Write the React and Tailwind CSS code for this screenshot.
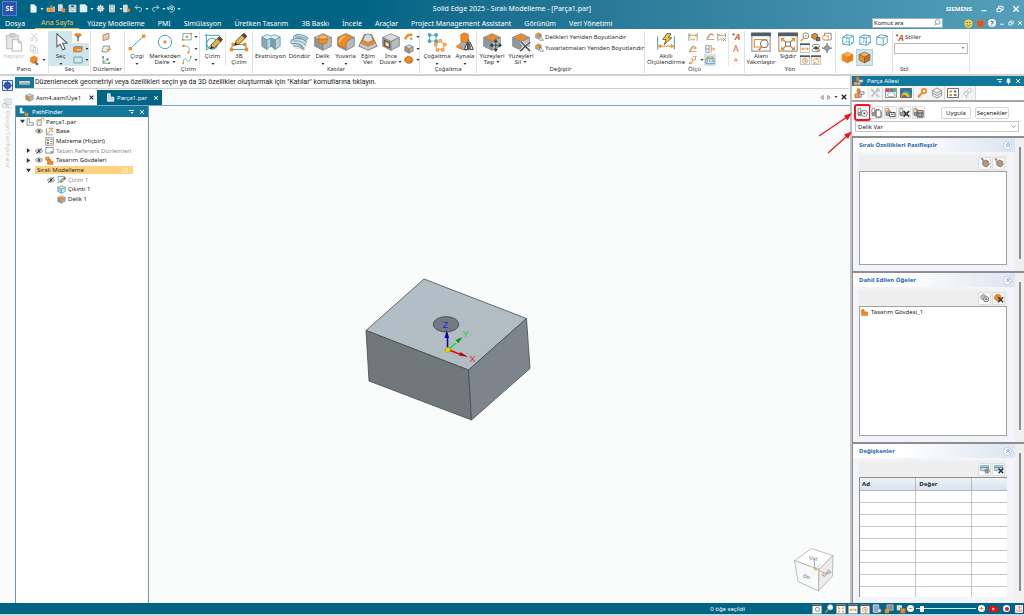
import React from "react";

/* ---------- drawing helpers ---------- */
const O = "#f08a24";
const G = "#6b7378";
const T = "#4aa3bd";

function Svg({ c = "w-[10px] h-[10px]", children, vb = "0 0 24 24" }) {
  return (
    <svg viewBox={vb} className={"shrink-0 " + c} fill="none" stroke={G} strokeWidth="2" strokeLinejoin="round" aria-hidden="true">
      {children}
    </svg>
  );
}
const BIG = "w-[20px] h-[20px]";
const SM = "w-[10px] h-[10px]";

function Caret({ light }) {
  return (
    <svg viewBox="0 0 6 4" className="h-[2px] w-[4px] shrink-0" aria-hidden="true">
      <path d="M0 0h6L3 4z" fill={light ? "#fff" : "#333"} />
    </svg>
  );
}

function CubeShape({ top = "#d5dadd", left = "#8f989d", right = "#b4bbbf", edge = "#7d868a", w = 1 }) {
  return (
    <g stroke={edge} strokeWidth={w}>
      <path d="M12 2l10 4.500-10 5L2 6.500z" fill={top} />
      <path d="M2 6.500l10 5V22L2 17z" fill={left} />
      <path d="M22 6.500l-10 5V22l10-5z" fill={right} />
    </g>
  );
}
const Cube = ({ c = BIG, children, ...p }) => (
  <Svg c={c}>
    <CubeShape {...p} />
    {children}
  </Svg>
);
const Wire = ({ hidden, c = "w-[14px] h-[14px]" }) => (
  <Svg c={c}>
    <g stroke={T} strokeWidth="1.600">
      <path d="M3 7l7-4 11 2v12l-7 4-11-2zM3 7l11 2 7-4M14 9v12" />
      {!hidden && <path d="M10 3v12l11 2M10 15l-7 4" strokeDasharray="3 2" />}
    </g>
  </Svg>
);
const Pencil = () => (
  <g>
    <path d="M9 20l1.500-5.500L18 7l4 4-7.700 7.300z" fill="#e9b04a" stroke="#4b4b4b" strokeWidth="1" />
    <path d="M17 8l4 4 3-3-4-4z" fill="#5e4438" stroke="none" />
    <path d="M9 20l1-3.500 2.500 2.500z" fill="#222" stroke="none" />
  </g>
);

/* ---------- ribbon icons ---------- */
const IPaste = (
  <Svg c={BIG}>
    <g stroke="#c4c8ca" strokeWidth="1.600">
      <path d="M3 4h14v16H3z" fill="#e6e8e9" />
      <path d="M7 2h6v4H7z" fill="#d3d7d9" />
      <path d="M10 9h7l4 4v10H10z" fill="#fff" />
      <path d="M17 9v4h4" />
    </g>
  </Svg>
);
const ICut = (
  <Svg>
    <g stroke="#c4c8ca">
      <path d="M8 15L19 3M16 15L5 3" />
      <circle cx="6" cy="18" r="3" />
      <circle cx="18" cy="18" r="3" />
    </g>
  </Svg>
);
const ICopy = (
  <Svg>
    <path d="M4 3h8l3 3v11H4zM10 8h7l4 4v10H10z" stroke="#c4c8ca" fill="#fff" />
  </Svg>
);
const IFormat = (
  <Svg c="w-[11px] h-[11px]">
    <path d="M3 6l8-4 7 4v8l-8 5-7-5z" fill={O} stroke="#c86c14" strokeWidth="1" />
    <path d="M13 14l8 6-5 2z" fill="#555" stroke="#555" strokeWidth="1" />
  </Svg>
);
const IArrow = (
  <Svg c={BIG}>
    <path d="M7 2v16l4-3.500 3 7 3-1.400-3-6.600h5.500z" fill="#fff" stroke="#5c6468" strokeWidth="1.300" />
  </Svg>
);
const IFilter = (
  <Svg>
    <path d="M4 7h16l-6 7v8h-4v-8z" fill="#7b8286" stroke="none" />
    <path d="M3 6l5-4 4 2 4-2 5 4v3H3z" fill={O} stroke="none" />
  </Svg>
);
const ISelBox = (
  <Svg>
    <path d="M1 9l4-3h17v10l-4 3H1z" fill="#e08a3c" stroke="#8a6b4c" strokeWidth="1.500" />
    <path d="M1 9h6v10H1z" fill={O} stroke="none" />
    <path d="M8 14h12" stroke="#f7d3ae" strokeWidth="3" />
  </Svg>
);
const IRect = (
  <Svg>
    <path d="M2 5h20v14H2z" stroke="#6d8f9c" />
  </Svg>
);
const IPlane1 = (
  <Svg>
    <path d="M5 7l14-4v13L5 21z" fill="#f2c9a3" stroke="#a0826a" />
  </Svg>
);
const IPlane2 = (
  <Svg>
    <path d="M2 19L6 5h15l-4 14z" fill="#eee" stroke="#7d868a" />
    <path d="M12 13h11M20 10l3 3-3 3" stroke={O} />
  </Svg>
);
const IPlane3 = (
  <Svg>
    <path d="M5 3v17h16M5 20l8-8" stroke={T} />
    <path d="M3 3h4v4H3zM13 8h5v5h-5zM18 17h4v4h-4z" fill="#777" stroke="none" />
    <path d="M4 14h4v4H4z" fill={O} stroke="none" />
  </Svg>
);
const ILine = (
  <Svg c={BIG}>
    <path d="M4 20L20 5" stroke={T} strokeWidth="1.200" />
    <path d="M2 18h4v4H2zM18 3h4v4h-4z" fill={O} stroke="none" />
  </Svg>
);
const ICircle = (
  <Svg c={BIG}>
    <circle cx="12" cy="12" r="8" stroke={T} strokeWidth="1.200" />
    <path d="M10.300 10.300h3.400v3.400h-3.400z" fill={O} stroke="none" />
  </Svg>
);
const IRectDot = (
  <Svg>
    <path d="M2 4h20v15H2z" stroke={T} />
    <path d="M9 9h6v5H9zM0 17h4v4H0zM20 2h4v4h-4z" fill={O} stroke="none" />
  </Svg>
);
const IArc = (
  <Svg>
    <path d="M4 5c12-1 16 5 12 15" stroke={T} />
    <path d="M1 2h5v5H1zM13 18h5v5h-5z" fill={O} stroke="none" />
  </Svg>
);
const ICurve = (
  <Svg>
    <path d="M3 19c0-12 7-12 9-6s8 2 9-8" stroke={T} />
    <path d="M1 18h4v4H1zM19 2h4v4h-4z" fill={O} stroke="none" />
  </Svg>
);
const ISketch = (
  <Svg c={BIG}>
    <path d="M4 2v20M2 4h18M4 22L20 5" stroke={T} strokeWidth="1.200" />
    <circle cx="11" cy="14" r="6.500" stroke={T} strokeWidth="1.400" />
    <Pencil />
  </Svg>
);
const ISketch3 = (
  <Svg c={BIG}>
    <path d="M5 15h14l3 6H2z" stroke={T} strokeWidth="1.200" />
    <path d="M3 13h4v4H3zM17 13h4v4h-4zM1 19h4v4H1zM19 19h4v4h-4z" fill={O} stroke="none" />
    <g transform="translate(-2 -4)">
      <Pencil />
    </g>
  </Svg>
);
const IExtrude = (
  <Svg c={BIG}>
    <g stroke={T} strokeWidth="1">
      <path d="M1 6l7-3 4 2 4-2 7 3-6 3.500-5-2-5 2z" fill="#e1edf1" />
      <path d="M1 6l6 3.500V21l-6-4z" fill="#98a4a9" />
      <path d="M7 9.500l5-2V17l-5 4zM23 6l-6 3.500V21l6-4z" fill="#c5d0d4" />
      <path d="M12 7.500l5 2V21l-5-4z" fill="#8c979c" />
    </g>
  </Svg>
);
const IRevolve = (
  <Svg c={BIG}>
    <path d="M8 3l14 4-4 14H7L2 16z" fill="#dde2e4" stroke="none" />
    <path d="M8 3c6 0 11 1 14 5M5 8c6-1 12 0 15 5M2 14c6-1 12 1 15 7M8 3C4 5 3 7 5 8M5 8c-4 2-5 4-3 6" stroke={T} strokeWidth="1.300" />
    <path d="M6 6c6-1 11 0 15 4M3 11c6-1 12 0 16 5M4 17c5-1 9 1 12 4" stroke="#9aa4a9" strokeWidth="1.600" />
  </Svg>
);
const IHole = (
  <Cube>
    <path d="M7 6v6c0 3 10 3 10 0V6z" fill={O} stroke="#c86c14" strokeWidth=".8" />
    <ellipse cx="12" cy="6" rx="5" ry="2.500" fill="#fbb469" stroke="#c86c14" strokeWidth=".8" />
  </Cube>
);
const IRound = (
  <Cube>
    <path d="M11 2.500l9 4C13 8 12 13 11.500 20L2 15c0-8 4-11 9-12.500z" fill={O} stroke="#c86c14" strokeWidth=".8" />
    <path d="M11 5C7 6 5 8 4 12" stroke="#ffc98a" strokeWidth="1.800" />
  </Cube>
);
const IDraft = (
  <Svg c={BIG}>
    <path d="M8 3h8l7 14-11 5L1 17z" fill="#c3cacd" stroke={G} strokeWidth="1" />
    <path d="M8 3l4 2 4-2 5 10-9 4-9-4z" fill={O} stroke="#c86c14" strokeWidth=".8" />
    <path d="M8 4l4-2 4 2 2 6-6 3-6-3z" fill="#d5dadd" stroke={G} strokeWidth=".8" />
  </Svg>
);
const IThin = (
  <Cube>
    <path d="M4 10l6 3v6l-6-3z" fill={O} stroke="#444" strokeWidth="1" />
    <path d="M6 12.500l3 1.500v3.500L6 16z" fill="#eee" stroke="none" />
  </Cube>
);
const ISweep = (
  <Svg>
    <path d="M4 18c0-9 7-12 16-11" stroke={O} strokeWidth="6" />
    <path d="M16 12l6 6h-8z" fill="#888" stroke="none" />
  </Svg>
);
const IRib = <Cube c={SM} w={2}><path d="M8 8l8 4v7l-4 2V14z" fill={O} stroke="none" /></Cube>;
const IAdd = (
  <Svg>
    <path d="M2 8l8-5 8 3 4 6-6 7-7 1-7-5z" fill={O} stroke="#b8640f" />
    <path d="M14 13l8 2-7 6z" fill="#6b7378" stroke="none" opacity=".6" />
  </Svg>
);
const IPattern = (
  <Svg c={BIG}>
    <g stroke={T} strokeWidth="1">
      <path d="M3 4h8v7H3z" />
      <path d="M1.500 2h3v3h-3zM9.500 2h3v3h-3zM1.500 9.500h3v3h-3zM9.500 9.500h3v3h-3z" fill="#4aa3bd" />
    </g>
    <g stroke={O} strokeWidth="1">
      <path d="M16 11l5 4-2 6h-7l-2-6z" />
      <path d="M14.500 9h3v3h-3zM20 13.500h3v3h-3zM17.500 20h3v3h-3zM11 20h3v3h-3zM9 13.500h3v3H9z" fill="#f7c795" />
    </g>
  </Svg>
);
const IMirror = (
  <Svg c={BIG}>
    <path d="M8 6h7v6l6 7-8 3-11-4 6-6z" fill="#a6afb3" stroke={G} strokeWidth="1" />
    <path d="M7 3l4-2 5 2v8l-4 2-5-2z" fill={O} stroke="#c86c14" strokeWidth=".8" />
    <path d="M3 15l6 3v4l-8-4z" fill={O} stroke="none" />
    <path d="M16.500 9v13M11 21l4-9v9zM22 21l-4-9v9z" stroke="#444" strokeWidth="1.200" fill="#ddd" />
  </Svg>
);
const IMove = (
  <Svg c={BIG}>
    <CubeShape top={O} />
    <path d="M16.500 10v12M10.500 16h12M16.500 9l-2 3h4zM16.500 23.500l-2-3h4zM9.500 16l3-2v4zM23.500 16l-3-2v4z" fill="#444" stroke="#444" strokeWidth="1.100" />
  </Svg>
);
const IDelFace = (
  <Svg c={BIG}>
    <CubeShape top={O} />
    <path d="M12 12l11 11M23 12L11 23" stroke="#fff" strokeWidth="3.500" />
    <path d="M12 12l11 11M23 12L11 23" stroke="#555" strokeWidth="2" />
  </Svg>
);
const IResize = (
  <Svg c="w-[9px] h-[9px]">
    <path d="M1 7l8-5 8 4v8l-8 5-8-4z" fill="#a6adb1" stroke={G} strokeWidth="1" />
    <path d="M4 5l6-3 6 3v5l-6 3-6-3z" fill={O} stroke="none" />
    <path d="M13 10v12h10z" fill="#fff" stroke="#555" strokeWidth="1.500" />
  </Svg>
);
const ISmart = (
  <Svg c={BIG}>
    <path d="M2 5v16M22 5v16" stroke={T} strokeWidth="1.300" />
    <path d="M3 17h18" stroke={O} strokeWidth="1.300" />
    <path d="M2 17l4-2.500v5zM22 17l-4-2.500v5z" fill={O} stroke="none" />
    <path d="M13 2h5l-3 5h4l-9 8 2-6H8z" fill="#f8c52c" stroke="#555" strokeWidth="1" />
  </Svg>
);
const mk = (d, e) => (
  <Svg>
    <path d={d} stroke={O} />
    {e && <path d={e} stroke="#6d8f9c" />}
  </Svg>
);
const ID1 = mk("M3 8h18M3 8l4-3M3 8l4 3M21 8l-4-3M21 8l-4 3M6 20l2-4 3 4 3-4 3 4", "M2 3v18M22 3v18");
const ID2 = mk("M4 18c2-12 8-14 16-8M3 18h18M15 4l5 6-7 1", "M4 20L12 4");
const ID3 = mk("M2 20h8v-8h8M18 4v8M12 4h9", "M10 12V6M5 20v-5");
const ID4 = mk("M4 16C6 8 12 3 20 6M6 18h16", "M4 20L14 4l7 5");
const ID5 = mk("M15 3v18M15 12h8M19 8l4 4-4 4", "M2 4h8v16H2zM2 12h8M15 4h-3");
const ID6 = mk("M4 6l4 3M20 6l-4 3M3 5h18", "M2 9h20v12H2zM6 13v4M12 13v4M18 13v4");
const ID7 = mk("M3 8h16M3 8l4-3M5 20l3-4 3 4 3-4", "M2 3v18M20 3v9M14 14l8 8M22 14l-8 8");
const LetterA = ({ size = "text-[9px] font-bold italic", lead }) => (
  <span className={"flex leading-none text-[#dd5a1c] " + size}>
    {lead && <span className="text-[6px] leading-none text-[#445566]">*</span>}A
  </span>
);
const Frame = ({ children, c = SM }) => (
  <Svg c={c}>
    <path d="M1 1h22v22H1z" fill="#fff" stroke="#9a9fa2" strokeWidth="1.500" />
    <path d="M0 1h24v4H0z" fill="#555c60" stroke="none" />
    {children}
  </Svg>
);
const IZoomArea = (
  <Frame c={BIG}>
    <path d="M4 9h15v9H4z" stroke={O} strokeWidth="1.400" />
    <circle cx="16" cy="14" r="4.500" fill="#fff" stroke={G} strokeWidth="1.300" />
    <path d="M12.500 18L9 22" stroke={O} strokeWidth="2" />
  </Frame>
);
const IFit = (
  <Frame c={BIG}>
    <path d="M9 12L5 8.500M15 12l4-3.500M9 17l-4 4M15 17l4 4" stroke={O} strokeWidth="1.800" />
    <path d="M3.500 7h5l-5 5zM20.500 7h-5l5 5zM3.500 22h5l-5-5zM20.500 22h-5l5-5z" fill={O} stroke="none" />
    <path d="M9 12h6v5H9z" fill="#fff" stroke={G} strokeWidth="1.200" />
  </Frame>
);
const IMag = (
  <Svg>
    <circle cx="14" cy="9" r="7" fill="#fff" />
    <path d="M9 14l-7 8" stroke={O} strokeWidth="3" />
    <path d="M11 11h6l-3-5z" fill={O} stroke="none" />
  </Svg>
);
const IPan = (
  <Svg>
    <path d="M2 6l8-3 6 3v8l-7 4-7-4z" fill={O} stroke="#555" />
    <path d="M13 13h8v8h-8z" fill="#777" stroke="#444" />
  </Svg>
);
const IWin = (
  <Svg>
    <path d="M6 3h16v16H6z" />
    <path d="M2 9h13v10H2z" fill="#fff" stroke={O} />
  </Svg>
);
const IWide = (
  <Frame>
    <path d="M4 14h16M4 14l4-3M4 14l4 3M20 14l-4-3M20 14l-4 3" stroke={O} />
  </Frame>
);
const ISpin = (
  <Svg>
    <ellipse cx="12" cy="7" rx="9" ry="4" />
    <ellipse cx="12" cy="17" rx="10" ry="4" />
    <path d="M7 12h12M12 7v10" stroke="#444" strokeWidth="3" />
    <path d="M15 15l6 4-7 2z" fill={O} stroke="none" />
  </Svg>
);
const ILook = (
  <Svg>
    <circle cx="12" cy="12" r="6" fill="#9aa3a7" />
    <path d="M12 0v5M12 19v5M0 12h5M19 12h5" stroke={G} strokeWidth="3" />
  </Svg>
);
const IRot = (
  <Frame>
    <circle cx="12" cy="14" r="6" stroke={O} />
    <path d="M12 11v4h3" stroke={G} />
  </Frame>
);
const IRot2 = (
  <Frame>
    <path d="M6 15a6 6 0 0 1 11-4M18 13a6 6 0 0 1-11 5M17 7v4h-4M7 22v-4h4" stroke={O} />
  </Frame>
);

/* ---------- ribbon pieces ---------- */
function Big({ icon, a, b, caret, w = "w-[27px]", on, dim }) {
  return (
    <button
      type="button"
      className={"flex h-[35px] shrink-0 flex-col items-center whitespace-nowrap pt-px text-[6px] leading-[6px] " + w + (on ? " bg-[#cfe6ec]" : "") + (dim ? " text-[#bfc3c5]" : " text-[#2e2e2e]")}
    >
      {icon}
      <span className="pt-px">{a}</span>
      {b && (
        <span className="flex items-center gap-[2px]">
          {b}
          {caret && <Caret />}
        </span>
      )}
      {caret && !b && <span className="mt-[4px] flex"><Caret /></span>}
    </button>
  );
}
function Small({ icon, caret, on, label }) {
  return (
    <button type="button" aria-label={label} className={"flex h-[12px] items-center justify-start gap-[2px] px-px " + (on ? "bg-[#cfe6ec]" : "")}>
      {icon}
      {caret && <Caret />}
    </button>
  );
}
const Col = ({ children, w = "w-[16px]" }) => <div className={"flex shrink-0 flex-col " + w}>{children}</div>;
const Rule = () => <div className="w-px shrink-0 self-stretch bg-[#e4e4e4]" />;
function Group({ name, w, children, align = "text-center" }) {
  return (
    <section className={"flex h-[42px] shrink-0 flex-col border-r border-[#e2e2e2] " + w}>
      <div className="flex h-[35px]">{children}</div>
      {name && <h2 className={"h-[7px] whitespace-nowrap text-[6px] leading-[7px] text-[#333] " + align}>{name}</h2>}
    </section>
  );
}

/* ---------- header ---------- */
const W = "#eef5f7";
const qa = (d, fill = "none", acc) => (
  <Svg c="w-[9px] h-[9px]">
    <path d={d} stroke={W} fill={fill} />
    {acc && <path d={acc} fill={O} stroke="none" />}
  </Svg>
);
const quick = [
  ["Yeni", qa("M5 2h9l5 5v15H5z", W), true, "w-[17px]"],
  ["Aç", qa("M3 11h14l5-4v13H3z", W, "M2 20l4-9h17l-4 10zM10 2l8 3-4 5z"), false, "w-[11px]"],
  ["Şablon", qa("M4 2h10v16H4z", "#cdd9dd", "M12 12h10v10H12z"), false, "w-[11px]"],
  ["Kaydet", qa("M3 3h18v18H3zM7 3v7h10V3M7 21v-7h10v7", "#b9b1a8"), false, "w-[11px]"],
  ["Farklı Kaydet", qa("M3 2h14l4 4v15H3zM7 13h8v8", "#e8eef0"), true, "w-[17px]"],
  [
    "Ayarlar",
    <Svg c="w-[9px] h-[9px]">
      <path d="M12 2v20M2 12h20M5 5l14 14M19 5L5 19" stroke={W} strokeWidth="3.500" />
      <circle cx="12" cy="12" r="5.500" fill="#d9c2ae" stroke={W} />
    </Svg>,
    false,
    "w-[12px]",
  ],
  ["Özellikler", qa("M4 3h13v18H4zM7 8h8M7 12h8M7 16h8", "#9dabb0"), true, "w-[14px]"],
  ["Yazdır", qa("M4 3h10v18H4z", "#d8d4d0", "M14 12h7v9h-7z"), false, "w-[12px]"],
  ["Geri Al", qa("M4 9h10c8 0 8 11 0 11M9 3L3 9l6 6"), true, "w-[17px]"],
  ["Yinele", qa("M20 9H10c-8 0-8 11 0 11M15 3l6 6-6 6"), true, "w-[16px]"],
  ["Güncelle", qa("M3 14c0-9 13-13 17-4M7 20c6 4 14-1 13-9M1 8l2 7 6-3M10 9h5v6h-5z"), false, "w-[10px]"],
];
const tabs = ["Yüzey Modelleme", "PMI", "Simülasyon", "Üretken Tasarım", "3B Baskı", "İncele", "Araçlar", "Project Management Assistant", "Görünüm", "Veri Yönetimi"];

const IMin = <path d="M4 17h15" strokeWidth="3.500" />;
const IRestore = <path d="M3 10h12v10H3zM8 9V4h13v11h-5" />;
const IClose = <path d="M4 4l16 16M20 4L4 20" strokeWidth="4" />;
const WinBtn = ({ label, d, c = "w-[8px] h-[8px]" }) => (
  <button type="button" aria-label={label} className="flex items-center">
    <svg viewBox="0 0 24 24" className={c} fill="none" stroke="#fff" strokeWidth="3" aria-hidden="true">{d}</svg>
  </button>
);

function Face({ fill, sad }) {
  return (
    <svg viewBox="0 0 24 24" className="h-[9px] w-[9px]" aria-hidden="true">
      <circle cx="12" cy="12" r="11" fill={fill} />
      <path d={sad ? "M7 18c3-4 7-4 10 0" : "M6 14c3 5 9 5 12 0"} stroke="#6a4a20" strokeWidth="2" fill="none" />
      <circle cx="8" cy="9" r="1.800" fill="#553" />
      <circle cx="16" cy="9" r="1.800" fill="#553" />
    </svg>
  );
}

function Header() {
  return (
    <header className="flex h-[29px] shrink-0 flex-col bg-linear-to-r from-[#006485] from-35% to-[#559fba] text-white">
      <div className="grid h-[17px] grid-cols-[1fr_auto_1fr] items-center">
        <div className="flex items-center pl-[3px]">
          <div className="mr-[13px] flex h-[13px] w-[13px] items-center justify-center bg-[#2f52b0] text-[7px] font-bold leading-none outline outline-[#5d7ccc]">SE</div>
          {quick.map(([n, i, caret, w]) => (
            <button key={n} type="button" aria-label={n} className={"flex shrink-0 items-center gap-[2px] " + w}>
              {i}
              {caret && <Caret light />}
            </button>
          ))}
          <Caret light />
        </div>
        <h1 className="text-[7px] leading-none">Solid Edge 2025 - Sıralı Modelleme - [Parça1.par]</h1>
        <div className="flex items-center justify-end gap-[8px] pr-[4px]">
          <span className="text-[6px] font-bold leading-none">SIEMENS</span>
          <WinBtn label="Simge durumuna küçült" d={IMin} />
          <WinBtn label="Geri yükle" d={IRestore} />
          <WinBtn label="Kapat" d={IClose} />
        </div>
      </div>
      <div className="flex h-[12px] items-center justify-between">
        <nav className="flex h-full items-center text-[7px] leading-none whitespace-nowrap">
          <button type="button" className="w-[30px] text-center">Dosya</button>
          <button type="button" className="ml-[5px] h-full border-b border-[#c9c25a] px-[6px] text-[#e6c84c]">Ana Sayfa</button>
          <div className="ml-[2px] flex gap-px">
            {tabs.map((t) => (
              <button key={t} type="button" className="px-[6px]">{t}</button>
            ))}
          </div>
        </nav>
        <div className="flex items-center gap-[3px] pr-px">
          <label className="mr-[18px] flex h-[10px] w-[71px] items-center border border-[#8fb9c9] bg-white pr-px">
            <input aria-label="Komut ara" placeholder="Komut ara" className="w-full min-w-0 px-px text-[6px] leading-none text-black outline-none placeholder:text-[#222]" />
            <Svg c="w-[8px] h-[8px]">
              <circle cx="14" cy="9" r="7" />
              <path d="M9 14l-6 7" />
            </Svg>
          </label>
          <Face fill="#f3d64a" />
          <Face fill="#d9663a" sad />
          <span className="flex h-[8px] w-[8px] items-center justify-center rounded-full bg-[#eef3f5] text-[7px] font-bold leading-none text-[#556677]">?</span>
          <WinBtn label="Belgeyi küçült" d={IMin} c="w-[6px] h-[6px]" />
          <WinBtn label="Belgeyi geri yükle" d={IRestore} c="w-[6px] h-[6px]" />
          <WinBtn label="Belgeyi kapat" d={IClose} c="w-[6px] h-[6px]" />
        </div>
      </div>
    </header>
  );
}

/* ---------- ribbon ---------- */
function Ribbon() {
  return (
    <div className="flex h-[47px] shrink-0 overflow-hidden border-b-2 border-[#d2d2d2] bg-white pt-[2px]">
      <Group name="Pano" w="w-[49px]">
        <Big icon={IPaste} a="Yapıştır" dim w="w-[28px]" />
        <Col>
          <Small label="Kes" icon={ICut} />
          <Small label="Kopyala" icon={ICopy} />
          <Small label="Biçim" icon={IFormat} caret />
        </Col>
      </Group>
      <Group name="Seç" w="w-[42px]">
        <Big icon={IArrow} a="Seç" caret on w="w-[23px]" />
        <Col w="w-[17px]">
          <Small label="Filtre" icon={IFilter} />
          <Small label="Seçim önceliği" icon={ISelBox} caret on />
          <Small label="Seçim kutusu" icon={IRect} caret on />
        </Col>
      </Group>
      <Group name="Düzlemler" w="w-[34px]">
        <Col w="w-[12px] ml-[9px]">
          <Small label="Çakışık düzlem" icon={IPlane1} />
          <Small label="Paralel düzlem" icon={IPlane2} />
          <Small label="Koordinat sistemi" icon={IPlane3} />
        </Col>
      </Group>
      <Group name="Çizim" w="w-[128px]">
        <Big icon={ILine} a="Çizgi" caret w="w-[24px]" />
        <Big icon={ICircle} a="Merkezden" b="Daire" caret w="w-[32px]" />
        <Col w="w-[18px]">
          <Small label="Dikdörtgen" icon={IRectDot} caret />
          <Small label="Yay" icon={IArc} caret />
          <Small label="Eğri" icon={ICurve} caret />
        </Col>
        <Rule />
        <Big icon={ISketch} a="Çizim" caret w="w-[25px]" />
        <Rule />
        <Big icon={ISketch3} a="3B" b="Çizim" w="w-[26px]" />
      </Group>
      <Group name="Katılar" w="w-[167px]">
        <Big icon={IExtrude} a="Ekstrüzyon" w="w-[35px]" />
        <Big icon={IRevolve} a="Döndür" w="w-[23px]" />
        <Big icon={IHole} a="Delik" caret w="w-[23px]" />
        <Big icon={IRound} a="Yuvarla" caret w="w-[23px]" />
        <Big icon={IDraft} a="Eğim" b="Ver" w="w-[22px]" />
        <Big icon={IThin} a="İnce" b="Duvar" caret w="w-[24px]" />
        <Col>
          <Small label="Süpürme" icon={ISweep} caret />
          <Small label="Federe" icon={IRib} caret />
          <Small label="Ekle" icon={IAdd} caret />
        </Col>
      </Group>
      <Group name="Çoğaltma" w="w-[57px]">
        <Big icon={IPattern} a="Çoğaltma" caret w="w-[34px]" />
        <Big icon={IMirror} a="Aynala" caret w="w-[22px]" />
      </Group>
      <Group name="Değiştir" w="w-[168px]">
        <Big icon={IMove} a="Yüzeyleri" b="Taşı" caret w="w-[30px]" />
        <Big icon={IDelFace} a="Yüzeyleri" b="Sil" caret w="w-[28px]" />
        <div className="flex flex-col whitespace-nowrap text-[6px] leading-none text-[#2e2e2e]">
          {["Delikleri Yeniden Boyutlandır", "Yuvarlatmaları Yeniden Boyutlandır"].map((t) => (
            <button key={t} type="button" className="flex h-[11px] items-center gap-px">
              {IResize}
              {t}
            </button>
          ))}
        </div>
      </Group>
      <Group name="Ölçü" w="w-[100px]">
        <Big icon={ISmart} a="Akıllı" b="Ölçülendirme" w="w-[42px]" />
        <Col w="w-[17px]">
          <Small label="Mesafe" icon={ID1} />
          <Small label="Açı" icon={ID2} />
          <Small label="Koordinat" icon={ID3} caret />
        </Col>
        <Col w="w-[12px]">
          <Small label="Açısal koordinat" icon={ID4} />
          <Small label="Simetrik çap" icon={ID5} />
          <Small label="Eksen" icon={ID6} on />
        </Col>
        <Col w="w-[12px]">
          <Small label="Ölçü sil" icon={ID7} />
        </Col>
        <Rule />
        <Col w="w-[14px] items-center">
          <Small label="Ölçü stili" icon={<LetterA lead />} />
          <Small label="Yazıyı büyüt" icon={<LetterA size="text-[9px]" />} />
          <Small label="Yazıyı küçült" icon={<LetterA size="text-[6px]" />} />
        </Col>
      </Group>
      <Group name="Yön" w="w-[91px]">
        <Big icon={IZoomArea} a="Alanı" b="Yakınlaştır" w="w-[32px]" />
        <Big icon={IFit} a="Sığdır" w="w-[22px]" />
        <div className="grid grid-cols-3">
          {[["Yakınlaştır", IMag], ["Kaydır", IPan], ["Görünüm penceresi", IWin], ["Genişlik", IWide], ["Döndür", ISpin], ["Yüze bak", ILook], ["Önceki görünüm", IRot], ["Yenile", IRot2]].map(([n, i]) => (
            <button key={n} type="button" aria-label={n} className="flex h-[11px] w-[11px] items-center justify-center">{i}</button>
          ))}
        </div>
      </Group>
      <Group w="w-[57px]">
        <div className="grid grid-cols-3 pl-[3px]">
          <button type="button" aria-label="Tel çerçeve" className="flex h-[17px] w-[17px] items-center justify-center"><Wire /></button>
          <button type="button" aria-label="Gizli kenarlar" className="flex h-[17px] w-[17px] items-center justify-center"><Wire /></button>
          <button type="button" aria-label="Görünür kenarlar" className="flex h-[17px] w-[17px] items-center justify-center"><Wire hidden /></button>
          <button type="button" aria-label="Gölgeli" className="flex h-[17px] w-[17px] items-center justify-center">
            <Cube c="w-[13px] h-[13px]" top="#fbb055" left="#f08a24" right="#e57c14" edge="#e57c14" />
          </button>
          <button type="button" aria-label="Kenarlı gölgeli" className="flex h-[17px] w-[17px] items-center justify-center border border-[#a9d3e0] bg-[#cfe6ec]">
            <Cube c="w-[13px] h-[13px]" top="#fbb055" left="#f08a24" right="#c9721c" edge="#555" />
          </button>
        </div>
      </Group>
      <Group name="Stil" w="w-[77px]" align="pl-[7px]">
        <div className="flex w-full flex-col px-px">
          <label htmlFor="style" className="flex h-[12px] items-center gap-px pl-px text-[6px] leading-none text-[#333]">
            <LetterA size="text-[9px] font-bold italic" lead /> Stiller
          </label>
          <div className="relative">
            <select id="style" className="block h-[11px] w-full appearance-none border border-[#b9b9b9] bg-white text-[6px]" />
            <span className="pointer-events-none absolute right-[3px] top-[4px] flex opacity-60"><Caret /></span>
          </div>
        </div>
      </Group>
    </div>
  );
}

/* ---------- tree ---------- */
const Eye = ({ off }) => (
  <Svg c="w-[8px] h-[8px]">
    <path d="M1 12c5-8 17-8 22 0-5 8-17 8-22 0z" stroke="#555" />
    <circle cx="12" cy="12" r="4.500" fill="#555" stroke="none" />
    {off && <path d="M3 21L21 3" stroke="#333" />}
  </Svg>
);
const Tri = ({ open }) => (
  <svg viewBox="0 0 6 6" className="h-[5px] w-[5px] shrink-0" aria-hidden="true">
    <path d={open ? "M0 1h6L3 5z" : "M1 0v6l4-3z"} fill="#333" />
  </svg>
);
const IPart = (
  <Svg c="w-[8px] h-[8px]">
    <path d="M3 2h7v12h12v8H3z" fill="#f5f5f5" />
  </Svg>
);
const IPart2 = (
  <Svg c="w-[9px] h-[9px]">
    <path d="M3 8h11v14H3z" />
    <path d="M8 15V9l9-5M13 3h8v8" stroke={O} />
  </Svg>
);
const IBase = (
  <Svg c="w-[9px] h-[9px]">
    <path d="M4 3v18h17M4 21L20 4" stroke="#7c8a90" />
    <path d="M10 2h5v4h-5zM18 9h4v4h-4zM2 10h4v4H2zM17 2h4v4h-4z" fill={O} stroke="none" />
  </Svg>
);
const IMat = (
  <Svg c="w-[9px] h-[9px]">
    <path d="M2 2h20v20H2z" fill="#fff" />
    <path d="M5 5h6v6H5z" fill={O} stroke="none" />
    <path d="M5 14h6v5H5z" fill="#3f8fb0" stroke="none" />
    <path d="M14 7h6M14 12h6M14 17h6" />
  </Svg>
);
const IRef = (
  <Svg c="w-[9px] h-[9px]">
    <path d="M2 4h20v15H2z" fill="#fff" stroke="#777" />
    <path d="M14 16h7" stroke="#777" strokeWidth="3" />
  </Svg>
);
const IBody = (
  <Svg c="w-[9px] h-[9px]">
    <path d="M2 3h9v8H2z" fill="#fbb055" stroke="#c86c14" />
    <path d="M7 9h8v5h6v8H7z" fill={O} stroke="#c86c14" />
  </Svg>
);
const ISk = (
  <Svg c="w-[9px] h-[9px]">
    <path d="M3 3v18M3 4h18M3 21L15 8" stroke={T} />
    <Pencil />
  </Svg>
);
const IExtr = (
  <Cube c="w-[9px] h-[9px]" top="#e1edf1" left="#b9cdd5" right="#dfe9ec" edge={T} w={2} />
);
const IHoleS = (
  <Cube c="w-[9px] h-[9px]" edge="#7d868a" w={1.5}>
    <path d="M7 5v8c0 3 10 3 10 0V5z" fill={O} stroke="none" />
  </Cube>
);
const L1 = "pl-[10px]";
const L2 = "pl-[22px]";
const tree = [
  { pad: L1, eye: "on", icon: IBase, t: "Base" },
  { pad: L1, icon: IMat, t: "Malzeme (Hiçbiri)" },
  { pad: L1, tri: true, eye: "off", icon: IRef, t: "Taban Referans Düzlemleri", dim: true },
  { pad: L1, tri: true, eye: "on", icon: IBody, t: "Tasarım Gövdeleri" },
  null,
  { pad: L2, eye: "off", icon: ISk, t: "Çizim 1", dim: true },
  { pad: L2, icon: IExtr, t: "Çıkıntı 1" },
  { pad: L2, icon: IHoleS, t: "Delik 1" },
];
function PathFinder() {
  return (
    <aside className="flex w-[134px] shrink-0 flex-col border-x border-[#6c97b8] bg-white">
      <div className="flex h-[11px] items-center gap-[3px] bg-[#12789b] px-[3px] text-[6px] leading-none text-white">
        <Svg c="w-[10px] h-[10px]">
          <path d="M2 2h6v9h5v4H2z" fill="#e8eef0" stroke="none" />
          <path d="M14 14h8v8h-8z" fill={O} stroke="none" />
        </Svg>
        <h2 className="flex-1">PathFinder</h2>
        <button type="button" aria-label="Menü" className="mr-[2px] flex flex-col items-center gap-px"><span className="h-px w-[5px] bg-white" /><Caret light /></button>
        <WinBtn label="PathFinder kapat" d={IClose} c="w-[6px] h-[6px]" />
      </div>
      <ul className="grid h-[87px] auto-rows-fr text-[6px] leading-none text-[#222]">
        <li className="flex items-center gap-px pl-[4px]">
          <Tri open />
          {IPart}
          <span className="flex pl-px">{IPart2}</span>
          <span>Parça1.par</span>
        </li>
        {tree.map((r, i) =>
          r ? (
            <li key={i} className={"flex items-center " + r.pad + (r.dim ? " text-[#8c8c8c]" : "")}>
              <span className="flex w-[9px]">{r.tri && <Tri />}</span>
              <span className="flex w-[10px]">{r.eye && <Eye off={r.eye === "off"} />}</span>
              {r.icon}
              <span className="whitespace-nowrap pl-[2px]">{r.t}</span>
            </li>
          ) : (
            <li key={i} className="flex items-center gap-[4px] pl-[10px]">
              <Tri open />
              <span className="flex h-[8px] w-[98px] items-center justify-between bg-[#ffd180] pl-[2px] pr-[4px]">
                Sıralı Modelleme
                <Svg c="w-[7px] h-[7px]"><path d="M3 4h14v16H3zM8 10l4 5 9-12" stroke="#fff4dc" /></Svg>
              </span>
            </li>
          )
        )}
      </ul>
    </aside>
  );
}

/* ---------- canvas ---------- */
function Viewport() {
  return (
    <main className="relative min-w-0 flex-1 overflow-hidden bg-[#fafcfc]">
      <svg viewBox="0 0 190 160" className="absolute left-[206px] top-[164px] h-[160px] w-[190px]" role="img" aria-label="Parça modeli">
        <defs>
          <linearGradient id="top" x1="0" y1="0" x2="1" y2="1"><stop offset="0" stopColor="#b3bfc6" /><stop offset="1" stopColor="#b0bcc2" /></linearGradient>
          <linearGradient id="side" x1="0" y1="0" x2="1" y2="1"><stop offset="0" stopColor="#7a828a" /><stop offset="1" stopColor="#80868e" /></linearGradient>
        </defs>
        <g stroke="#444b50" strokeWidth=".8" strokeLinejoin="round">
          <path d="M69 9l102.500 39.500L113.500 100 11 60.500z" fill="url(#top)" />
          <path d="M11 60.500L113.500 100l3 50L14 111z" fill="#70787b" />
          <path d="M171.500 48.500L113.500 100l3 50 58.500-51.500z" fill="url(#side)" />
          <ellipse cx="91" cy="54.300" rx="12.800" ry="7.700" fill="#737b80" />
        </g>
        <path d="M92.500 79V67" stroke="#0808a8" strokeWidth="1.600" />
        <path d="M91.800 60l-2.300 8h4.600z" fill="#0808a8" />
        <path d="M94 79l7-6" stroke="#0be00b" strokeWidth="1.400" />
        <path d="M107.500 67l-7 3 2.800 3.300z" fill="#0a9a1a" />
        <path d="M94 80l13 5" stroke="#e80808" strokeWidth="1.400" />
        <path d="M113 87l-7.500-5-1.500 3.600z" fill="#b80808" />
        <circle cx="92.700" cy="79.800" r="2.600" fill="#e8d800" stroke="#8a8200" strokeWidth=".5" />
        <g fontFamily="Liberation Sans" fontSize="9" textAnchor="middle">
          <text x="90.500" y="58" fill="#1c1cf0">Z</text>
          <text x="110.500" y="66.500" fill="#0be00b">Y</text>
          <text x="117.500" y="92" fill="#f02020">X</text>
        </g>
      </svg>
      <svg viewBox="0 0 42 46" className="absolute bottom-[10px] right-[15px] h-[46px] w-[42px]" role="img" aria-label="Görünüm küpü">
        <g stroke="#a0a4a6" strokeWidth=".7" strokeLinejoin="round">
          <path d="M1.500 13.500L18.500 1.500 40 8.500 26 22.500z" fill="#fff" />
          <path d="M1.500 13.500L26 22.500l-.5 21.500L5 34.500z" fill="#f8f9f9" />
          <path d="M40 8.500L26 22.500l-.5 21.500L39.500 29z" fill="#ececec" />
        </g>
        <g fontFamily="Liberation Sans" fontSize="5" fontWeight="bold" fill="#909396" textAnchor="middle">
          <text x="13.500" y="31.500" transform="rotate(14 14 30)">Ön</text>
          <text x="20" y="13" transform="rotate(10 20 12)">Üst</text>
          <text x="33" y="28" transform="rotate(-40 33 26)">Sağ</text>
        </g>
        <path d="M22 22l-1-10" stroke="#9a9af0" strokeWidth=".9" />
        <path d="M22 22l6-5" stroke="#90ee90" strokeWidth=".9" />
        <path d="M22 22l10 4" stroke="#f09a9a" strokeWidth=".9" />
        <circle cx="22" cy="22" r="1.500" fill="#d8d040" />
      </svg>
    </main>
  );
}

/* ---------- right panel ---------- */
const fam = (acc) => (
  <Svg c="w-[11px] h-[11px]">
    <path d="M2 3h6v14H2zM8 9h4v8" fill="#fff" strokeWidth="1.500" />
    <path d="M3 12h6v7H3z" fill="#9aa3a7" strokeWidth="1.500" />
    {acc}
  </Svg>
);
const famBtns = [
  ["Yeni üye", fam(<><circle cx="16" cy="14" r="6.500" fill="#fff" stroke="#555" strokeWidth="1.500" /><path d="M13 14h6M16 11v6" stroke="#444" strokeWidth="1.500" /></>)],
  ["Üye kopyala", fam(<path d="M11 6h7l4 4v12H11z" fill="#fff" stroke="#444" />)],
  ["Yeniden adlandır", fam(<><path d="M10 12h12v9H10z" fill="#fff" stroke="#444" /><path d="M4 7h8v5H4z" fill={O} stroke="none" /><path d="M13 16h6" stroke="#444" /></>)],
  ["Üye sil", fam(<path d="M10 9l12 12M22 9L10 21" stroke="#333" strokeWidth="3.500" />)],
  ["Tablo", fam(<><path d="M9 8h13v14H9z" fill="#ddd" stroke="#444" /><path d="M9 13h13M13 13v9M18 13v9" stroke="#444" /><path d="M5 5h6v4H5z" fill={O} stroke="none" /></>)],
];
const IFam = (
  <Svg c="w-[11px] h-[11px]">
    <path d="M7 2h6v9H7z" fill={O} stroke="#b8640f" strokeWidth="1.500" />
    <path d="M12 8h10v6H12z" fill="#e4e6e7" strokeWidth="1.500" />
    <path d="M2 13h10v8H2z" fill="#f5a550" stroke="#b8640f" strokeWidth="1.500" />
    <path d="M10 13h6v7h-6z" fill="#c9cdcf" strokeWidth="1.500" />
  </Svg>
);
const PT = "w-[12px] h-[12px]";
const panelTabs = [
  ["Parça Ailesi", IFam],
  ["Araçlar", <Svg c={PT}><path d="M4 4l7 7M14 14l6 6M19 4L5 19" stroke="#bfc3c5" strokeWidth="3.500" /><circle cx="18" cy="6" r="3" stroke="#bfc3c5" /></Svg>],
  ["Görünüm", <Svg c={PT}><path d="M1 3h22v18H1z" fill="#e7f0f4" stroke="#777" strokeWidth="1.500" /><path d="M2 4h7v6H2z" fill="#e8405a" stroke="none" /><path d="M9 4h7v6H9z" fill="#4a7ae0" stroke="none" /><path d="M16 4h6v6h-6z" fill="#58b858" stroke="none" /><path d="M7 19a4 4 0 0 1 1-7 5 5 0 0 1 9 1 3 3 0 0 1 0 6z" fill="#fff" stroke="#999" strokeWidth="1.500" /></Svg>],
  ["Simülasyon", <Svg c={PT}><path d="M1 3h22v18H1z" fill="#2b6fb5" stroke="#456" strokeWidth="1.500" /><path d="M2 20C2 5 20 4 22 20z" fill="#46b85c" stroke="none" /><path d="M3 20c0-11 14-11 15 0z" fill="#f4d238" stroke="none" /><path d="M4 20c0-7 9-7 10 0z" fill="#e8432c" stroke="none" /></Svg>],
  ["Anahtar", <Svg c={PT}><path d="M13 11L4 20M5 17l3 3" stroke={O} strokeWidth="4" /><circle cx="16" cy="8" r="4.500" stroke={O} strokeWidth="3.500" /></Svg>],
  ["Katmanlar", <Svg c={PT}><path d="M12 2l9 5-9 5-9-5zM3 12l9 5 9-5M3 17l9 5 9-5M3 7v10M21 7v10" stroke="#8b9195" strokeWidth="1.800" /></Svg>],
  ["Kitaplık", <Svg c={PT}><path d="M1 3h22v18H1z" fill="#fff" /><path d="M5 7h5v4H5zM5 14h5v4H5z" fill={O} stroke="none" /><path d="M14 7h5v4h-5zM14 14h5v4h-5z" fill="#777" stroke="none" /></Svg>],
  ["Bağlantı", <Svg c={PT}><circle cx="15" cy="7" r="4" stroke="#c4c8ca" /><circle cx="8" cy="13" r="4" stroke="#c4c8ca" /><path d="M9 16v6" stroke="#c4c8ca" /></Svg>],
];
const ToolBtn = ({ label, children, red }) => (
  <button type="button" aria-label={label} className={"flex h-[13px] w-[13px] items-center justify-center rounded-[1px] bg-[#f8f8f8] " + (red ? "outline-2 outline-[#f5141c]" : "border border-[#dedede]")}>
    {children}
  </button>
);

const Gear = ({ x }) => (
  <Svg>
    <path d="M7 9l6-4 7 3 2 7-5 6-8-2-3-5z" fill="#9aa3a7" stroke={G} />
    <path d="M11 10h8v7h-8z" fill={O} stroke="none" />
    {x ? <path d="M2 2l6 3M5 1v8" stroke="#c0392b" /> : <path d="M2 2h5v6" stroke="#333" />}
  </Svg>
);

function Section({ title, tools, children, h }) {
  return (
    <section className={"flex flex-col border-l border-t-2 border-[#8e8e8e] " + h}>
      <div className="flex min-h-0 flex-1">
        <div className="flex min-w-0 flex-1 flex-col bg-[#f3f4f9]">
          <div className="flex h-[14px] shrink-0 items-center justify-between bg-linear-to-r from-white from-30% to-[#dde5f0] pl-[6px] pr-[3px]">
            <h3 className="text-[6px] font-bold leading-none text-[#1c69ad]">{title}</h3>
            <button type="button" aria-label="Daralt" className="flex h-[9px] w-[9px] items-center justify-center rounded-full border border-[#b7cde4] bg-white">
              <Svg c="w-[6px] h-[6px]"><path d="M5 12l7-7 7 7M5 20l7-7 7 7" stroke="#2a6fb0" strokeWidth="3" /></Svg>
            </button>
          </div>
          <div className="mb-[6px] ml-[6px] mr-[8px] mt-[3px] flex min-h-0 flex-1 flex-col bg-[#eeeeee]">
            <div className="flex h-[16px] shrink-0 items-center justify-end gap-px pr-[2px]">{tools}</div>
            {children}
          </div>
        </div>
        <div className="flex w-[9px] shrink-0 justify-center bg-[#f0f0f0] pb-[12px] pt-[9px]"><div className="w-[2px] bg-[#8d8d8d]" /></div>
      </div>
    </section>
  );
}
const IVar = (acc) => (
  <Svg>
    <path d="M1 4h20v12H1z" fill="#b9dbe6" stroke="#7aa5b5" />
    <path d="M1 8h20" stroke="#3f7f98" />
    {acc}
  </Svg>
);

function FamilyPanel() {
  return (
    <aside className="relative flex w-[174px] shrink-0 flex-col border-l-2 border-[#bfc3c5] bg-white">
      <div className="flex h-[10px] shrink-0 items-center gap-[3px] bg-[#12789b] pl-px pr-[3px] text-[6px] leading-none text-white">
        <span className="flex">{IFam}</span>
        <h2 className="flex-1">Parça Ailesi</h2>
        <button type="button" aria-label="Menü" className="flex flex-col items-center gap-px"><span className="h-px w-[5px] bg-white" /><Caret light /></button>
        <WinBtn label="Sabitle" c="w-[7px] h-[7px]" d={<path d="M8 3h8v10H8zM4 14h16M12 14v8" fill="#fff" />} />
        <WinBtn label="Panel kapat" d={IClose} c="w-[6px] h-[6px]" />
      </div>
      <div className="flex h-[16px] shrink-0 border-b-2 border-[#a5a5a5] bg-[#f3f3f3]">
        {panelTabs.map(([n, i], k) => (
          <button key={n} type="button" aria-label={n} className={"box-content flex w-[15px] items-center justify-center " + (k ? "bg-[#f3f3f3]" : "bg-white") + (k % 2 ? " border-r border-[#d8d8d8]" : "")}>{i}</button>
        ))}
        <div className="flex-1 bg-white" />
      </div>
      <div className="flex h-[17px] shrink-0 items-end pl-[4px] pr-[15px]">
        <div className="flex gap-px">
          {famBtns.map(([n, i], k) => <ToolBtn key={n} label={n} red={k === 0}>{i}</ToolBtn>)}
        </div>
        <div className="ml-auto flex gap-[4px] text-[6px] leading-none text-[#222]">
          <button type="button" className="h-[12px] w-[30px] rounded-[2px] border border-[#d5d5d5] bg-white">Uygula</button>
          <button type="button" className="h-[12px] w-[34px] rounded-[2px] border border-[#d5d5d5] bg-white">Seçenekler</button>
        </div>
      </div>
      <div className="relative mb-[4px] mt-[2px] shrink-0 pl-[3px] pr-[5px]">
        <select aria-label="Aile üyesi" className="block h-[11px] w-full appearance-none border border-[#c4c4c4] bg-white pl-[2px] text-[6px] leading-none text-[#222]">
          <option>Delik Var</option>
        </select>
        <span className="pointer-events-none absolute right-[8px] top-[3px] flex"><Svg c="w-[5px] h-[5px]"><path d="M2 7l10 10L22 7" strokeWidth="3" /></Svg></span>
      </div>
      <Section
        title="Sıralı Özellikleri Pasifleştir"
        h="h-[135px] shrink-0"
        tools={<><ToolBtn label="Pasifleştir"><Gear /></ToolBtn><ToolBtn label="Pasifleştirmeyi kaldır"><Gear x /></ToolBtn></>}
      >
        <ul className="flex-1 border border-[#a2a2a2] bg-white" />
      </Section>
      <Section
        title="Dahil Edilen Öğeler"
        h="h-[171px] shrink-0"
        tools={<><ToolBtn label="Öğe ekle"><Svg><path d="M2 7l6-4 6 3v7l-6 4-6-4z" fill="#bbb" stroke="#999" /><circle cx="15" cy="15" r="6" fill="#fff" stroke="#555" /><path d="M12 15h6M15 12v6" stroke="#555" /></Svg></ToolBtn><ToolBtn label="Öğe sil"><Svg><path d="M2 7l7-4 7 3v9l-7 4-7-4z" fill={O} stroke="#c86c14" /><path d="M10 10l12 12M22 10L10 22" stroke="#333" strokeWidth="3.500" /></Svg></ToolBtn></>}
      >
        <ul className="flex-1 border border-[#a2a2a2] bg-white text-[6px] leading-none text-[#222]">
          <li className="flex h-[10px] items-center gap-[3px] pl-px">
            <Svg c="w-[7px] h-[7px]"><path d="M2 2h9v8h11v12H2z" fill={O} stroke="#c86c14" /></Svg>
            Tasarım Gövdesi_1
          </li>
        </ul>
      </Section>
      <Section
        title="Değişkenler"
        h="min-h-0 flex-1"
        tools={<><ToolBtn label="Değişken ekle">{IVar(<><circle cx="17" cy="17" r="5" fill="#ddd" stroke="#555" /><path d="M15 17h4M17 15v4" stroke="#555" /></>)}</ToolBtn><ToolBtn label="Değişken sil">{IVar(<path d="M11 11l11 11M22 11L11 22" stroke="#333" strokeWidth="3.500" />)}</ToolBtn></>}
      >
        <div className="min-h-0 flex-1 overflow-hidden border-l border-t border-[#8e8e8e] bg-white">
          <table className="w-full table-fixed border-collapse text-left text-[6px] leading-none text-[#222]">
            <thead>
              <tr className="h-[12px] bg-linear-to-b from-[#eef3fa] to-[#d9e2ee]">
                <th className="w-[38%] border-b border-r border-[#b5b9be] px-[2px] font-bold">Ad</th>
                <th className="w-[38%] border-b border-r border-[#b5b9be] px-[3px] font-bold">Değer</th>
                <th className="border-b border-[#b5b9be]" aria-label="Boş" />
              </tr>
            </thead>
            <tbody>
              {Array.from({ length: 9 }, (_, i) => (
                <tr key={i} className="h-[12px]">
                  <td className="border-b border-r border-[#c6c6c6]" />
                  <td className="border-b border-r border-[#c6c6c6]" />
                  <td className="border-b border-[#c6c6c6]" />
                </tr>
              ))}
            </tbody>
          </table>
        </div>
      </Section>
      <svg viewBox="0 0 36 48" className="pointer-events-none absolute -left-[34px] top-[35px] h-[48px] w-[36px]" aria-hidden="true">
        <g stroke="#f5141c" strokeWidth="1.300" fill="#f5141c">
          <path d="M1 25L29 6M10 42L29 25" />
          <path d="M34 2l-8 2.500 3.500 5zM34 20.500l-8 3 4 4.500z" stroke="none" />
        </g>
      </svg>
    </aside>
  );
}

/* ---------- status bar ---------- */
const stat = [
  ["Alanı yakınlaştır", <Frame><circle cx="13" cy="13" r="5" /></Frame>],
  ["Yakınlaştır", <Svg><circle cx="15" cy="8" r="6" fill="#fff" stroke="#dde" /><path d="M10 13l-7 8" stroke={O} strokeWidth="3" /></Svg>],
  ["Sığdır", <Frame><path d="M5 8l4 4M19 8l-4 4M5 20l4-4M19 20l-4-4" stroke={O} strokeWidth="3" /></Frame>],
  ["Kaydır", IWide],
  ["Döndür", IRot],
  ["Görünüm", <Svg><path d="M3 2h13v18H3z" fill="#9ab" stroke="#dde" /><circle cx="17" cy="16" r="5" fill="#ddd" stroke="#789" /></Svg>],
  ["Yüze bak", <Svg><path d="M7 2h15v13H7z" fill="#8a8f92" stroke="#bbb" /><path d="M2 12h10v10H2z" fill={O} stroke="none" /></Svg>],
  ["Stil", <Svg><path d="M3 4h10v10H3z" fill="#bfe0ea" stroke="#fff" /><path d="M11 10h11v12H11z" fill={O} stroke="#8a6a4c" /></Svg>],
];
const Round = ({ label, d }) => (
  <button type="button" aria-label={label} className="flex h-[7px] w-[7px] items-center justify-center rounded-full bg-white">
    <Svg c="h-[7px] w-[7px]"><path d={d} stroke="#e07a1c" strokeWidth="3" /></Svg>
  </button>
);
function StatusBar() {
  return (
    <footer className="flex h-[13px] shrink-0 items-center justify-end border-b-2 border-[#c9d8de] bg-[#006485] pr-px text-[6px] leading-none text-white">
      <p className="mr-[67px]">0 öğe seçildi</p>
      <div className="flex items-center gap-[2px]">
        {stat.map(([n, i]) => <button key={n} type="button" aria-label={n} className="flex">{i}</button>)}
      </div>
      <div className="flex items-center gap-[2px] pl-px">
        <Round label="Uzaklaştır" d="M6 12h12" />
        <input
          type="range"
          aria-label="Yakınlaştırma"
          defaultValue="8"
          className="h-[7px] w-[60px] appearance-none bg-[linear-gradient(#d5e5ea,#d5e5ea)] bg-[length:100%_1px] bg-center bg-no-repeat [&::-webkit-slider-thumb]:h-[6px] [&::-webkit-slider-thumb]:w-[4px] [&::-webkit-slider-thumb]:appearance-none [&::-webkit-slider-thumb]:rounded-[1px] [&::-webkit-slider-thumb]:bg-white"
        />
        <Round label="Yakınlaştır" d="M6 12h12M12 6v12" />
      </div>
      <div className="flex items-center gap-[5px] pl-[4px]">
        <button type="button" aria-label="Video" className="flex"><svg viewBox="0 0 24 16" className="h-[6px] w-[9px]" aria-hidden="true"><rect width="24" height="16" rx="4" fill="#f00a0a" /><path d="M9 4l7 4-7 4z" fill="#fff" /></svg></button>
        <button type="button" aria-label="Kaydet" className="flex h-[7px] w-[7px] items-center justify-center rounded-full bg-white"><span className="h-[4px] w-[4px] rounded-full bg-[#d0202a]" /></button>
        <button type="button" aria-label="Paylaş" className="flex h-[8px] w-[8px] items-center justify-center rounded-[1px] bg-[#fbe9ea]"><Svg c="w-[7px] h-[7px]"><path d="M12 18V5M6 10l6-6 6 6M3 16v5h18v-5" stroke="#e05a62" /></Svg></button>
      </div>
    </footer>
  );
}

/* ---------- page ---------- */
export default function App() {
  return (
    <div className="flex h-screen flex-col overflow-hidden bg-[#fafcfc] font-['Noto_Sans',sans-serif] text-[6px] text-[#222]">
      <Header />
      <Ribbon />
      <div className="flex min-h-0 flex-1">
        <div className="flex w-[15px] shrink-0 flex-col items-center gap-[7px] pt-[4px]">
          <Svg c="w-[11px] h-[11px]">
            <path d="M1 1h22v22H1z" fill="#dbe8f7" stroke="#2f52b0" />
            <circle cx="12" cy="12" r="6" fill="#3f7fd0" stroke="#1c3f9c" strokeWidth="3" />
            <path d="M12 1v22M1 12h22" stroke="#2f52b0" />
          </Svg>
          <button type="button" className="flex flex-col items-center gap-[2px] leading-none text-[#c6c9ca]">
            <Svg c="w-[11px] h-[11px]"><path d="M6 2h14v12H6zM9 6h8M9 10h8M2 12h8v9H2zM13 14v7h8" stroke="#c4c8ca" /></Svg>
            <span className="[writing-mode:vertical-rl]">Design Configurator</span>
          </button>
        </div>
        <div className="flex min-w-0 flex-1 flex-col">
          <div className="mr-px mt-px flex h-[12px] shrink-0 items-center border-b border-[#cfcfcf] bg-white">
            <span className="flex h-[11px] w-[19px] items-center justify-center bg-[#12789b]"><span className="h-[4px] w-[11px] bg-linear-to-b from-[#d5dadd] to-[#8f989d]" /></span>
            <p className="pl-px font-[Roboto,sans-serif] text-[7px] leading-none">Düzenlenecek geometriyi veya özellikleri seçin ya da 3D özellikler oluşturmak için "Katılar" komutlarına tıklayın.</p>
          </div>
          <div className="flex h-[17px] shrink-0 items-end justify-between border-b border-[#7fa6c6]">
            <div className="flex h-[15px] leading-none">
              <div className="flex w-[82px] items-center gap-[2px] bg-white pl-[10px] pr-[3px]">
                <Cube c="w-[9px] h-[9px]" left={O} w={1.5} />
                <span className="flex-1 whitespace-nowrap">Asm4.asm!Üye1</span>
                <button type="button" aria-label="Asm4 kapat" className="flex"><Svg c="w-[5px] h-[5px]"><path d="M3 3l18 18M21 3L3 21" stroke="#222" strokeWidth="5" /></Svg></button>
              </div>
              <div className="flex w-[65px] items-center gap-[2px] bg-[#006485] pl-[9px] pr-[3px] text-white">
                <Svg c="w-[9px] h-[9px]"><path d="M4 2h7v9h10v11H4z" fill="#cfd6d9" stroke="#fff" /></Svg>
                <span className="flex-1 whitespace-nowrap">Parça1.par</span>
                <WinBtn label="Parça1 kapat" d={IClose} c="w-[6px] h-[6px]" />
              </div>
            </div>
            <div className="flex h-full items-center gap-[3px] pr-[3px]">
              <button type="button" aria-label="Önceki" className="flex"><Svg c="w-[4px] h-[5px]" vb="0 0 16 20"><path d="M13 2L3 10l10 8z" strokeWidth="3" /></Svg></button>
              <button type="button" aria-label="Sonraki" className="flex"><Svg c="w-[4px] h-[5px]" vb="0 0 16 20"><path d="M3 2l10 8-10 8z" strokeWidth="3" /></Svg></button>
              <button type="button" aria-label="Belgeler" className="flex"><Caret /></button>
              <button type="button" aria-label="Belgeyi kapat" className="flex"><Svg c="w-[6px] h-[6px]"><path d="M3 3l18 18M21 3L3 21" stroke="#222" strokeWidth="5" /></Svg></button>
            </div>
          </div>
          <div className="flex min-h-0 flex-1">
            <PathFinder />
            <Viewport />
          </div>
        </div>
        <FamilyPanel />
      </div>
      <StatusBar />
    </div>
  );
}
